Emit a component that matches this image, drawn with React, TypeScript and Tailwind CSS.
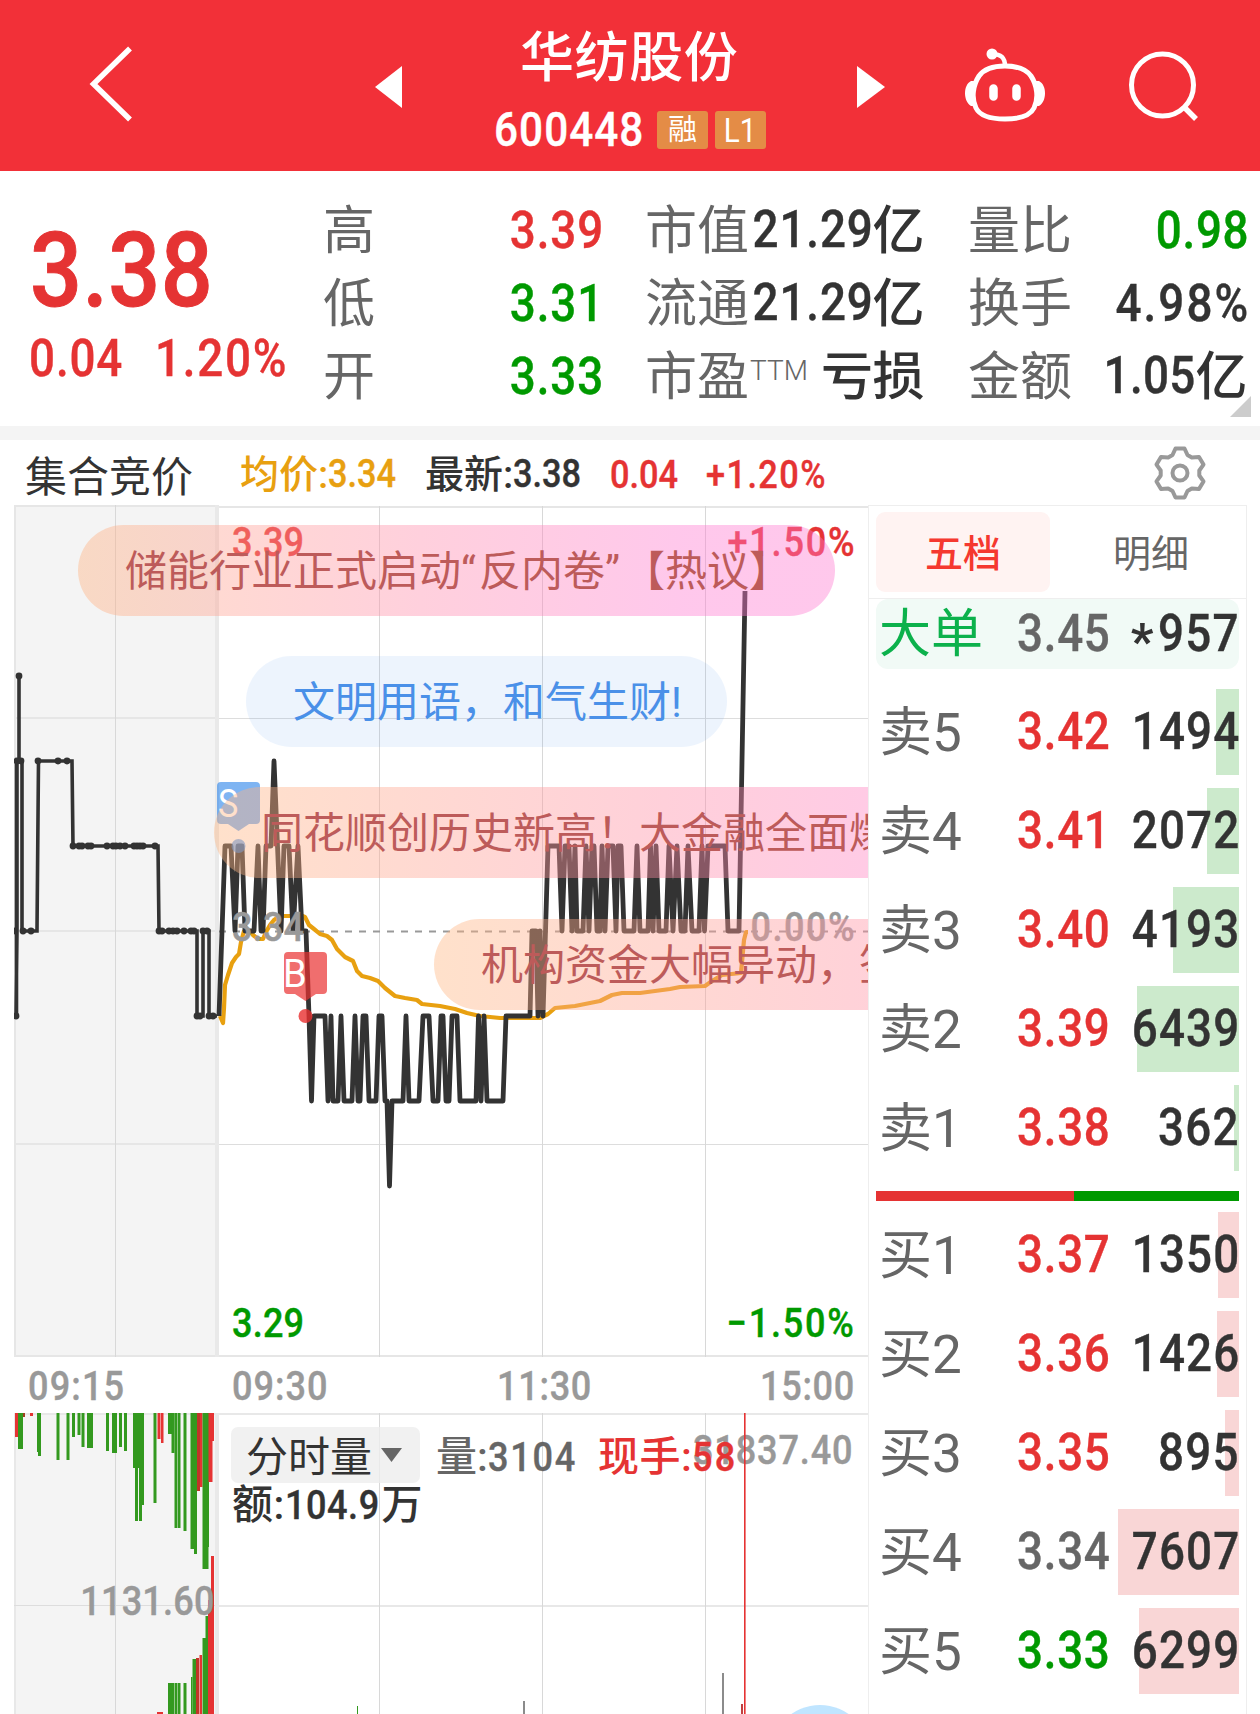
import React from 'react';

// 盘口档位: 名称 / 价格 / 数量 / 量柱宽度
type Level = { name: string; price: string; tone: string; volume: string; bar: number };

const RED = 'text-[#e53333]';
const GREEN = 'text-[#009900]';
const GRAY = 'text-[#666666]';
const DARK = 'text-[#333333]';

const sells: Level[] = [
  { name: '卖5', price: '3.42', tone: RED, volume: '1494', bar: 23 },
  { name: '卖4', price: '3.41', tone: RED, volume: '2072', bar: 32 },
  { name: '卖3', price: '3.40', tone: RED, volume: '4193', bar: 66 },
  { name: '卖2', price: '3.39', tone: RED, volume: '6439', bar: 102 },
  { name: '卖1', price: '3.38', tone: RED, volume: '362', bar: 5 },
];

const buys: Level[] = [
  { name: '买1', price: '3.37', tone: RED, volume: '1350', bar: 21 },
  { name: '买2', price: '3.36', tone: RED, volume: '1426', bar: 22 },
  { name: '买3', price: '3.35', tone: RED, volume: '895', bar: 14 },
  { name: '买4', price: '3.34', tone: GRAY, volume: '7607', bar: 121 },
  { name: '买5', price: '3.33', tone: GREEN, volume: '6299', bar: 100 },
];

// 集合竞价
const auctionPath =
  'M16 1016 L17 931 M13.5 931 H17 M17 931 V761 M16.5 1016 V761 M19 676 V761 M22 761 V931 M22 931 H37 L38.5 761 H72 L73 846 H158 L159 931 H197 V1016 H203 V931 H209 V1016 H217';

const auctionDots: [number, number][] = [
  [16, 1016], [13.5, 931], [19, 676], [17, 761], [21, 761], [23, 931], [31, 931],
  ...[38, 58, 67].map((x): [number, number] => [x, 761]),
  ...[73, 79, 82, 88, 91, 107, 113, 116, 120, 125, 134, 137, 140, 143, 155].map((x): [number, number] => [x, 846]),
  ...[159, 162, 169, 173, 177, 184, 191, 194, 203, 207].map((x): [number, number] => [x, 931]),
  ...[197, 200, 209, 213].map((x): [number, number] => [x, 1016]),
];

const pricePoints =
  '219,1016 225,846 231,846 235,931 238,846 242,846 245,931 254,931 258,846 261,931 263,931 266,846 271,846 274,761 281,931 284,846 289,846 293,931 298,846 302,931 306,931 309,1016 311.5,1101 314,1016 325,1016 328,1101 331,1016 333,1101 338,1101 341,1016 344,1101 352,1101 355,1016 358,1101 360,1101 363,1016 366,1016 369,1101 376,1101 379,1016 382,1016 385,1101 387,1101 389.5,1186 392,1101 403,1101 406,1016 409,1101 419,1101 423,1016 429,1016 433,1101 438,1101 441,1016 443,1016 446,1101 449,1101 452,1016 457,1016 460,1101 476,1101 478.5,1016 481,1101 484,1016 487,1101 503,1101 506,1016 530,1016 532,931 536,931 538,1016 540,931 543,1016 548,846 559,846 562,931 565,846 569,846 572,931 575,846 577,931 583,931 586,846 589,931 592,846 594,846 597,931 600,931 602,846 605,931 608,846 613,846 616,931 618,846 621,846 624,931 634,931 637,846 640,931 648,931 650.5,846 653,931 656,846 659,931 666,931 669,846 673,931 677,846 681,931 685,931 688,846 692,931 699,931 702,846 704.5,931 708,846 725,846 728,931 739,931 745,591';

const avgPoints =
  '220,1016 223,1023 224,1008 225,985 228,975 232,963 236,957 239,954 241,942 244,931 250,931 253,935 258,939 263,939 266,932 270,925 274,920 280,916 290,916 300,915 305,917 309,925 314,929 320,934 327,936 332,940 337,949 345,957 353,961 357,971 362,976 370,978 378,981 385,988 395,996 405,998 417,1000 422,1004 440,1006 455,1009 467,1013 480,1016 500,1018 540,1018 548,1014 555,1008 575,1006 590,1003 600,1001 612,995 622,993 640,993 655,991 670,989 680,987 705,986 712,981 722,975 741,973 744,940 746,932 748,932';

// 竞价量柱: x, 宽, 底部 y, 颜色
const RB = '#e53333';
const GB = '#33991f';
const topBars: [number, number, number, string][] = [
  [15, 3, 1437, RB], [18, 5, 1449, GB], [23, 2, 1417, '#a04020'], [30, 3, 1416, RB], [37, 2, 1452, GB], [38, 3, 1456, GB],
  [56.5, 3, 1460, GB], [66.5, 3, 1460, GB], [72, 3, 1437, GB], [77.5, 3, 1435, GB], [81.5, 3, 1447, GB],
  [87, 6, 1448, GB], [106, 3, 1451, GB], [112, 5, 1453, GB], [119, 3, 1447, GB], [124, 3, 1451, GB],
  [133, 11, 1468, GB], [135, 3, 1521, GB], [139, 3, 1521, GB], [142, 2, 1505, GB], [153.5, 3, 1503, GB],
  [157.5, 3, 1439, RB], [161, 2.5, 1443, RB], [168, 5, 1434, GB], [171.5, 3, 1453, GB], [174.5, 3, 1528, GB],
  [178, 2.5, 1528, GB], [183.5, 3, 1531, GB], [190.5, 4, 1549, GB], [194, 3, 1554, GB], [197, 3, 1491, '#c03528'],
  [200, 2.5, 1487, RB], [202.5, 6, 1569, GB], [207, 2, 1547, GB], [208.5, 4, 1482, RB], [211, 3, 1441, RB],
];
const bottomBars: [number, number, number, string][] = [
  [157, 6, 1712, RB], [168, 6, 1683, GB], [174.5, 3, 1683, GB], [178, 2.5, 1683, GB], [183.5, 3, 1683, GB],
  [191, 1.5, 1677, GB], [192.5, 3.5, 1659, GB], [196, 3, 1658, '#c03528'], [199.5, 2.5, 1655, RB], [202.5, 4, 1638, GB],
  [205.5, 3, 1616, GB], [208, 3.5, 1600, RB], [211, 3, 1556, RB],
];

const gearPoints = [0, 60, 120, 180, 240, 300]
  .flatMap((deg) =>
    [[-7.5, -18], [-4.5, -24.5], [4.5, -24.5], [7.5, -18]].map(([x, y]) => {
      const a = (deg * Math.PI) / 180;
      return `${(x * Math.cos(a) - y * Math.sin(a)).toFixed(1)},${(x * Math.sin(a) + y * Math.cos(a)).toFixed(1)}`;
    })
  )
  .join(' ');

// 窄体数字
const Num = ({ className = '', children }: { className?: string; children: React.ReactNode }) => (
  <span className={`inline-block scale-x-[0.88] font-medium whitespace-nowrap [-webkit-text-stroke:0.4px_currentColor] ${className}`}>
    {children}
  </span>
);

const Header = () => (
  <header className="flex h-[171px] items-start bg-[#f23038] text-white">
    <svg className="mt-[42px] ml-[87px] h-[84px] w-[50px] shrink-0" viewBox="0 0 50 84" fill="none" stroke="#fff" strokeWidth="5.5">
      <path d="M43 6.500 L6.500 42 L43 77.500" />
    </svg>
    <svg className="mt-[66px] ml-[238px] h-[42px] w-[27px] shrink-0" viewBox="0 0 27 42" fill="#fff">
      <path d="M27 0 V42 L0 21 Z" />
    </svg>
    <div className="ml-[92px] flex w-[273px] flex-col">
      <h1 className="mt-[32px] pl-[26px] text-[54px] leading-[54px] font-medium tracking-[0.6px]">华纺股份</h1>
      <div className="mt-[20px] flex h-[48px] items-center">
        <div className="w-[163px]">
          <Num className="origin-left text-[48px] leading-[48px] tracking-[1.2px]">600448</Num>
        </div>
        <span className="flex h-[38px] w-[51px] items-center justify-center rounded-[3px] bg-[#e48c46] text-[29px] leading-none">融</span>
        <span className="ml-[7px] flex h-[38px] w-[51px] items-center justify-center rounded-[3px] bg-[#e48c46] text-[33px] leading-none">
          <span className="scale-x-[0.9]">L1</span>
        </span>
      </div>
    </div>
    <svg className="mt-[66px] ml-[90px] h-[42px] w-[28px] shrink-0" viewBox="0 0 28 42" fill="#fff">
      <path d="M0 0 V42 L28 21 Z" />
    </svg>
    <svg className="mt-[46px] ml-[75px] h-[80px] w-[90px] shrink-0" viewBox="0 0 90 80" fill="none" stroke="#fff" strokeWidth="5">
      <path d="M45 20 C56 20 66 23 71 30 C77 39 79 52 74 62 C70 70 60 73 45 73 C30 73 20 70 16 62 C11 52 13 39 19 30 C24 23 34 20 45 20 Z" />
      <path d="M32 8 C40 8 45 11 45 20" strokeWidth="4.500" />
      <circle cx="32" cy="8" r="5.500" fill="#fff" stroke="none" />
      <path d="M11 35 C3 39 3 55 11 60 L15 60 L14 35 Z M79 35 C87 39 87 55 79 60 L75 60 L76 35 Z" fill="#fff" stroke="none" />
      <path d="M33.500 42.500 V50.500 M56.500 42.500 V50.500" strokeWidth="8.500" strokeLinecap="round" />
    </svg>
    <svg className="mt-[48px] ml-[76px] h-[76px] w-[76px] shrink-0" viewBox="0 0 76 76" fill="none" stroke="#fff" strokeWidth="5">
      <circle cx="36.500" cy="37" r="31" />
      <path d="M57 58 L70 71" strokeWidth="5.500" />
    </svg>
  </header>
);

type StatProps = { label: string; value?: string; unit?: string; tone: string; sup?: string; numClass?: string };

const Stat = ({ label, value, unit, tone, sup, numClass = 'tracking-[1px] -mr-[1px]' }: StatProps) => (
  <div className="flex h-[73px] items-center justify-between text-[52px] leading-[52px] whitespace-nowrap">
    <span className="flex pt-[2px] text-[#666666]">
      {label}
      {sup && <sup className="top-0 pl-[1px] text-[28px] leading-[38px] font-light tracking-[0px]">{sup}</sup>}
    </span>
    <span className={`flex font-medium ${tone}`}>
      {value && <Num className={`-ml-[20px] origin-right ${numClass}`}>{value}</Num>}
      {unit && <span className="pt-[2px] tracking-[-0.5px]">{unit}</span>}
    </span>
  </div>
);

const Quote = () => (
  <section className="relative flex h-[255px] bg-white pt-[23px]">
    <div className="flex w-[323px] flex-col pl-[30px] text-[#e53333]">
      <Num className="mt-[25px] origin-left text-[104px] leading-[104px] tracking-[0.5px] [-webkit-text-stroke:1px_currentColor]">3.38</Num>
      <div className="mt-[10px] flex text-[52px] leading-[52px]">
        <div className="w-[125px] -translate-x-[1px]">
          <Num className="origin-left tracking-[1px]">0.04</Num>
        </div>
        <Num className="origin-left tracking-[2px]">1.20%</Num>
      </div>
    </div>
    <div className="w-[280px]">
      <Stat label="高" value="3.39" tone={RED} />
      <Stat label="低" value="3.31" tone={GREEN} />
      <Stat label="开" value="3.33" tone={GREEN} />
    </div>
    <div className="ml-[42px] w-[279px]">
      <Stat label="市值" value="21.29" unit="亿" tone={DARK} />
      <Stat label="流通" value="21.29" unit="亿" tone={DARK} />
      <Stat label="市盈" sup="TTM" unit="亏损" tone={DARK} />
    </div>
    <div className="ml-[44px] w-[279px]">
      <Stat label="量比" value="0.98" tone={GREEN} numClass="tracking-[0.8px] -mr-[2px]" />
      <Stat label="换手" value="4.98%" tone={DARK} numClass="tracking-[2.4px] -mr-[3px]" />
      <Stat label="金额" value="1.05" unit="亿" tone={DARK} numClass="tracking-[0.4px]" />
    </div>
    <svg className="absolute right-[9px] bottom-[9px] h-[21px] w-[21px]" viewBox="0 0 21 21">
      <path d="M21 0 V21 H0 Z" fill="#cccccc" />
    </svg>
  </section>
);

const Legend = () => (
  <div className="flex h-[65px] items-center pl-[25px] text-[39px] leading-[39px] whitespace-nowrap">
    <span className="w-[215px] pt-[11px] text-[42px] leading-[42px] text-[#333333]">集合竞价</span>
    <div className="flex w-[185px] pt-[5px] text-[#e8a010]">
      <span className="pt-px font-medium">均价:</span>
      <Num className="origin-left">3.34</Num>
    </div>
    <div className="flex w-[185px] pt-[5px] text-[#333333]">
      <span className="pt-px font-medium">最新:</span>
      <Num className="origin-left">3.38</Num>
    </div>
    <div className="w-[96px] pt-[5px] text-[#e53333]">
      <Num className="origin-left">0.04</Num>
    </div>
    <Num className="origin-left pt-[5px] tracking-[1.6px] text-[#e53333]">+1.20%</Num>
    <svg className="mr-[51px] ml-auto h-[58px] w-[58px]" viewBox="-29 -29 58 58" fill="none" stroke="#999999" strokeWidth="4" strokeLinejoin="round">
      <polygon points={gearPoints} />
      <circle r="7.500" />
    </svg>
  </div>
);

const Danmu = ({ className, children }: { className: string; children: React.ReactNode }) => (
  <div
    className={`absolute flex h-[91px] items-center rounded-full pt-[2px] pl-[47px] text-[42px] leading-[42px] whitespace-nowrap [text-spacing-trim:space-all] ${className}`}
  >
    {children}
  </div>
);

const HOT = 'bg-[linear-gradient(90deg,rgba(255,178,128,.41),rgba(255,141,172,.41)_45%,rgba(255,121,208,.41)_80%)] text-[#bd5b5a]';
const HOT_WIDE = 'bg-[linear-gradient(90deg,rgba(255,182,128,.41),rgba(255,141,165,.41)_55%,rgba(255,121,208,.41)_95%)] text-[#bd5b5a]';

const PriceChart = () => (
  <div className="relative h-[852px] overflow-hidden text-[41px] leading-[41px]">
    <svg className="absolute -left-[14px] h-[852px] w-[869px]" viewBox="0 505 869 852" fill="none">
      <rect x="14" y="505" width="205" height="852" fill="#f4f4f4" />
      <g stroke="#e6e6e6" strokeWidth="2">
        <path d="M14 506 H217 M219 507 H869 M14 718 H217 M14 931 H217 M14 1144 H217 M14 1356 H869" />
        <path d="M219 718.5 H869 M219 1144.5 H869" strokeWidth="1" stroke="#dddddd" />
        <path d="M115.500 505 V1357 M379.500 506 V1357 M542.500 506 V1357 M705.500 506 V1357" strokeWidth="1" stroke="#d8d8d8" />
        <path d="M15 505 V1357" />
        <path d="M217 505 V1357" strokeWidth="4" stroke="#e9e9e9" />
      </g>
      <path d="M219 931.5 H869" stroke="#999999" strokeWidth="1.800" strokeDasharray="7 7" />
      <path d={auctionPath} stroke="#333333" strokeWidth="3.600" />
      {auctionDots.map(([x, y], i) => (
        <circle key={i} cx={x} cy={y} r="3.400" fill="#333333" />
      ))}
      <polyline points={avgPoints} stroke="#e8a010" strokeWidth="4.200" strokeLinejoin="round" />
      <polyline points={pricePoints} stroke="#333333" strokeWidth="4.800" strokeLinejoin="round" />
      <g fill="#2f86ea" fillOpacity="0.62">
        <path d="M221 782 H256 Q260 782 260 786 V820 Q260 824 256 824 H249 L238.500 831 L228 824 H221 Q217 824 217 820 V786 Q217 782 221 782 Z" />
        <circle cx="238.500" cy="846" r="7" />
      </g>
      <g fill="#e93030" fillOpacity="0.7">
        <path d="M288 952 H323 Q327 952 327 956 V990 Q327 994 323 994 H316 L305.500 1001 L295 994 H288 Q284 994 284 990 V956 Q284 952 288 952 Z" />
        <circle cx="305.500" cy="1016" r="7" fillOpacity="0.8" />
      </g>
    </svg>
    <span className="absolute top-[279px] left-[204px] origin-left scale-x-[0.9] text-[38px] text-white">S</span>
    <span className="absolute top-[449px] left-[269px] text-[38px] text-white">B</span>
    <Num className="absolute top-[17px] left-[218px] origin-left tracking-[0.2px] text-[#e53333]">3.39</Num>
    <Num className="absolute top-[17px] right-[12px] origin-right tracking-[2px] text-[#e53333]">+1.50%</Num>
    <Num className="absolute top-[402px] left-[218px] origin-left tracking-[0.2px] text-[#999999]">3.34</Num>
    <Num className="absolute top-[402px] right-[12px] origin-right tracking-[1.7px] text-[#999999]">0.00%</Num>
    <Num className="absolute top-[798px] left-[218px] origin-left tracking-[0.2px] text-[#009900]">3.29</Num>
    <Num className="absolute top-[798px] right-[12px] origin-right tracking-[2px] text-[#009900]">−1.50%</Num>
    <Danmu className={`top-[20px] left-[64px] w-[757px] ${HOT}`}>
      储能行业正式启动<span className="tracking-[3px]">“</span>反内卷<span className="tracking-[3px]">”</span>【热议】
    </Danmu>
    <Danmu className="top-[151px] left-[232px] w-[481px] bg-[#4a90f0]/10 text-[#4a90e8]">文明用语，和气生财!</Danmu>
    <Danmu className={`top-[282px] left-[200px] w-[816px] ${HOT_WIDE}`}>同花顺创历史新高！大金融全面爆发</Danmu>
    <Danmu className={`top-[414px] left-[420px] w-[860px] ${HOT_WIDE}`}>机构资金大幅异动，签到领取</Danmu>
  </div>
);

const TimeAxis = () => (
  <div className="flex h-[56px] items-center pt-[3px] pl-[14px] text-[41px] leading-[41px] text-[#999999]">
    <div className="w-[204px]">
      <Num className="origin-left tracking-[1.3px]">09:15</Num>
    </div>
    <div className="w-[265px]">
      <Num className="origin-left tracking-[1.1px]">09:30</Num>
    </div>
    <Num className="origin-left tracking-[0.8px]">11:30</Num>
    <Num className="mr-[13px] ml-auto origin-right tracking-[0.8px]">15:00</Num>
  </div>
);

const VolumeChart = () => (
  <div className="relative h-[301px] overflow-hidden text-[41px] leading-[41px]">
    <svg className="absolute -left-[14px] h-[301px] w-[869px]" viewBox="0 1413 869 301" fill="none">
      <rect x="14" y="1413" width="205" height="301" fill="#f4f4f4" />
      <path d="M14 1414 H869 M219 1606 H869 M15 1413 V1714" stroke="#e8e8e8" strokeWidth="2" />
      <path d="M14 1605.5 H219" stroke="#dddddd" />
      <path d="M115.500 1413 V1714 M379.500 1413 V1714 M542.500 1413 V1714 M705.500 1413 V1714" stroke="#d8d8d8" />
      <path d="M217 1413 V1714" stroke="#e9e9e9" strokeWidth="4" />
      {topBars.map(([x, w, y, c], i) => (
        <rect key={i} x={x} y={1413} width={w} height={y - 1413} fill={c} />
      ))}
      {bottomBars.map(([x, w, y, c], i) => (
        <rect key={i} x={x} y={y} width={w} height={1714 - y} fill={c} />
      ))}
      <path d="M357.500 1706 V1714" stroke="#33991f" />
      <path d="M524 1701 V1714 M723 1673 V1714" stroke="#666666" strokeWidth="1.500" />
      <path d="M742 1704 V1714" stroke="#c04040" strokeWidth="2" />
      <circle cx="820" cy="1755" r="50" fill="#c0e5ff" />
    </svg>
    <Num className="absolute top-[168px] right-[653px] origin-right tracking-[0.2px] text-[#999999]">1131.60</Num>
    <Num className="absolute top-[17px] right-[14px] origin-right tracking-[1px] text-[#999999]">31837.40</Num>
    <svg className="absolute left-[730px] h-[301px] w-[2px]" viewBox="0 0 2 301">
      <rect width="1.600" height="301" fill="#e53333" />
    </svg>
    <div className="relative ml-[217px] pt-[14px] whitespace-nowrap">
      <div className="flex h-[56px] items-center">
        <div className="flex h-[56px] w-[189px] items-center rounded-[7px] bg-[#eeeeee]/80 pl-[15px]">
          <span className="pt-[6px] text-[42px] leading-[42px] text-[#333333]">分时量</span>
          <svg className="ml-[9px] h-[14px] w-[21px]" viewBox="0 0 21 14">
            <path d="M0 0 H21 L10.500 14 Z" fill="#666666" />
          </svg>
        </div>
        <div className="ml-[16px] flex w-[162px] pt-[4px] text-[#666666]">
          <span className="font-medium">量:</span>
          <Num className="origin-left tracking-[2px]">3104</Num>
        </div>
        <div className="flex pt-[4px] text-[#e53333]">
          <span className="font-medium tracking-[0.5px]">现手:</span>
          <Num className="origin-left tracking-[2.5px]">58</Num>
        </div>
      </div>
      <div className="flex pt-[2px] pl-[1px] text-[#333333]">
        <span className="font-medium tracking-[0.5px]">额:</span>
        <Num className="-mr-[11px] origin-left tracking-[0.6px]">104.9</Num>
        <span className="font-medium">万</span>
      </div>
    </div>
  </div>
);

const BookRow = ({ level, fill }: { level: Level; fill: string }) => (
  <div className="relative flex h-[86px] items-center text-[52px] leading-[52px]">
    <div className={`absolute top-0 right-0 h-[86px] ${fill}`} style={{ width: level.bar }} />
    <span className="relative w-[141px] shrink-0 pt-[2px] pl-[3px] text-[53px] text-[#666666]">{level.name}</span>
    <div className="relative w-[90px] shrink-0">
      <Num className={`origin-left tracking-[0.8px] ${level.tone}`}>{level.price}</Num>
    </div>
    <Num className="relative -mr-[1px] ml-auto origin-right tracking-[1.3px] text-[#333333]">{level.volume}</Num>
  </div>
);

const OrderBook = () => (
  <aside className="h-[1209px] w-[379px] border-t border-r border-l border-[#eeeeee] bg-white px-[7px]">
    <div className="-mx-[7px] flex h-[93px] items-center border-b border-[#eeeeee] px-[7px] text-[38px] leading-[38px]">
      <div className="flex h-[80px] w-[174px] items-center justify-center rounded-[9px] bg-[#fff3f2] pt-[3px] font-medium text-[#f5382f]">五档</div>
      <div className="flex flex-1 items-center justify-center pt-[3px] pl-[13px] text-[#666666]">明细</div>
    </div>
    <div className="flex h-[70px] items-center rounded-[12px] bg-[#f1faf6] text-[52px] leading-[52px]">
      <span className="w-[141px] shrink-0 pt-[2px] pl-[3px] text-[#0cb14c]">大单</span>
      <Num className="origin-left tracking-[0.8px] text-[#666666]">3.45</Num>
      <div className="-mr-[1px] ml-auto flex items-center text-[#333333]">
        <span className="-mr-[6px] pt-[15px] text-[50px] font-bold">*</span>
        <Num className="origin-right tracking-[1.3px]">957</Num>
      </div>
    </div>
    <div className="mt-[20px] flex flex-col gap-[13px]">
      {sells.map((level) => (
        <BookRow key={level.name} level={level} fill="bg-[#cceacc]" />
      ))}
    </div>
    <div className="mt-[20px] flex h-[10px]">
      <div className="w-[198px] bg-[#e53333]" />
      <div className="flex-1 bg-[#009900]" />
    </div>
    <div className="mt-[11px] flex flex-col gap-[13px]">
      {buys.map((level) => (
        <BookRow key={level.name} level={level} fill="bg-[#f9d6d6]" />
      ))}
    </div>
  </aside>
);

export default function App() {
  return (
    <div className="h-[1714px] w-[1260px] overflow-hidden bg-white font-['Roboto','Noto_Sans_CJK_SC',sans-serif]">
      <Header />
      <Quote />
      <div className="h-[14px] bg-[#f4f4f4]" />
      <Legend />
      <main className="flex pl-[14px]">
        <div className="w-[854px]">
          <PriceChart />
          <TimeAxis />
          <VolumeChart />
        </div>
        <OrderBook />
      </main>
    </div>
  );
}
